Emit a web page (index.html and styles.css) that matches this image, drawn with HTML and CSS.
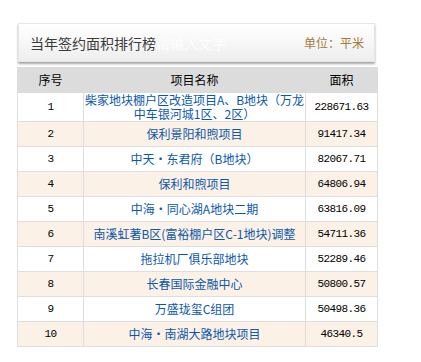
FILE: index.html
```html
<!DOCTYPE html>
<html lang="zh-CN">
<head>
<meta charset="utf-8">
<title>当年签约面积排行榜</title>
<link rel="stylesheet" href="styles.css">
</head>
<body>
<div class="panel">
  <div class="title-bar">
    <div class="title"><span class="title-text">当年签约面积排行榜</span><span class="ghost">请输入文字</span></div>
    <div class="unit">单位：平米</div>
  </div>
  <table class="rank">
    <colgroup><col class="c1"><col class="c2"><col class="c3"></colgroup>
    <thead>
      <tr><th>序号</th><th>项目名称</th><th>面积</th></tr>
    </thead>
    <tbody>
      <tr class="tall"><td class="num">1</td><td class="name">柴家地块棚户区改造项目A、B地块（万龙<br>中车银河城1区、2区）</td><td class="num">228671.63</td></tr>
      <tr class="alt"><td class="num">2</td><td class="name">保利景阳和煦项目</td><td class="num">91417.34</td></tr>
      <tr><td class="num">3</td><td class="name">中天·东君府（B地块）</td><td class="num">82067.71</td></tr>
      <tr class="alt"><td class="num">4</td><td class="name">保利和煦项目</td><td class="num">64806.94</td></tr>
      <tr><td class="num">5</td><td class="name">中海·同心湖A地块二期</td><td class="num">63816.09</td></tr>
      <tr class="alt"><td class="num">6</td><td class="name">南溪虹著B区(富裕棚户区C-1地块)调整</td><td class="num">54711.36</td></tr>
      <tr><td class="num">7</td><td class="name">拖拉机厂俱乐部地块</td><td class="num">52289.46</td></tr>
      <tr class="alt"><td class="num">8</td><td class="name">长春国际金融中心</td><td class="num">50800.57</td></tr>
      <tr><td class="num">9</td><td class="name">万盛珑玺C组团</td><td class="num">50498.36</td></tr>
      <tr class="alt"><td class="num">10</td><td class="name">中海·南湖大路地块项目</td><td class="num">46340.5</td></tr>
    </tbody>
  </table>
</div>
</body>
</html>
```
FILE: styles.css
```css
html, body {
  margin: 0;
  padding: 0;
  background: #ffffff;
}
body {
  font-family: "Noto Sans CJK SC", "Noto Sans", sans-serif;
  font-size: 12px;
  color: #000;
}
.panel {
  padding: 23px 0 0 17px;
  width: 360px;
}
.title-bar {
  margin-left: 1px;
  border: 1px solid #e6e6e6;
  background: linear-gradient(#ffffff, #eeeeee);
  box-shadow: 0 2px 2px rgba(0, 0, 0, 0.35);
  display: flex;
  align-items: center;
  justify-content: space-between;
  padding: 0 10px 0 11px;
  box-sizing: border-box;
  width: 357px;
  height: 39px;
}
.title {
  font-size: 14px;
  color: #3a3a3a;
  display: flex;
  align-items: center;
}
.ghost {
  color: rgba(255, 255, 255, 0.85);
  font-size: 14px;
  margin-left: 0;
}
.unit {
  color: #a57a3a;
  font-size: 12px;
}
.rank {
  margin-top: 5px;
  border-collapse: collapse;
  width: 360px;
  table-layout: fixed;
}
.c1 { width: 66px; }
.c2 { width: 222px; }
.c3 { width: 72px; }
.rank th {
  background: #dcdcdc;
  font-weight: normal;
  height: 24px;
  padding: 0;
  border: 1px solid #dcdcdc;
  line-height: 24px;
}
.rank td {
  border: 1px solid #dedede;
  height: 24px;
  padding: 0;
  text-align: center;
  line-height: 14px;
  white-space: nowrap;
}
.rank tr.tall td {
  height: 28px;
  line-height: 14px;
}
.rank tr.alt td {
  background: #fbf1e6;
}
.rank td.name {
  color: #0b58ab;
}
.rank td.num {
  font-family: "Liberation Mono", "DejaVu Sans Mono", monospace;
  font-size: 11px;
  letter-spacing: -0.6px;
}
```
